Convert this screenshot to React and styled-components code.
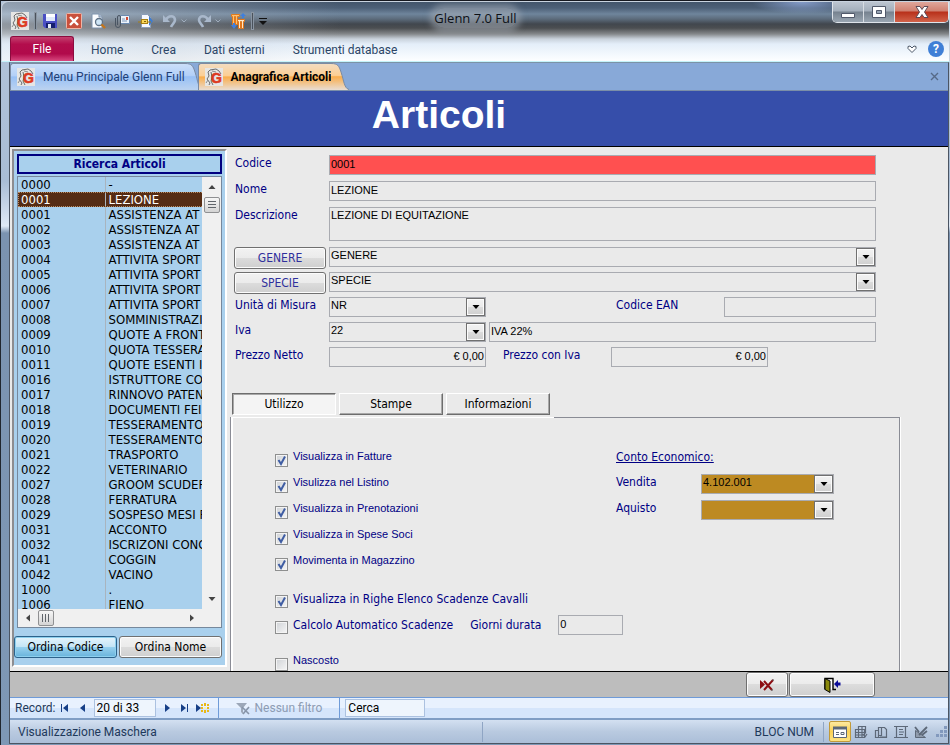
import React, { useState } from "react";
import styled, { createGlobalStyle, css } from "styled-components";

const ui = `Roboto, "Open Sans", sans-serif`;
const form = `"DejaVu Sans Condensed", "DejaVu Sans", sans-serif`;
const plain = `"Liberation Sans", Arial, sans-serif`;

const articles = [
    ["0000", "-"],
    ["0001", "LEZIONE"],
    ["0001", "ASSISTENZA AT"],
    ["0002", "ASSISTENZA AT"],
    ["0003", "ASSISTENZA AT"],
    ["0004", "ATTIVITA SPORT"],
    ["0005", "ATTIVITA SPORT"],
    ["0006", "ATTIVITA SPORT"],
    ["0007", "ATTIVITA SPORT"],
    ["0008", "SOMMINISTRAZI"],
    ["0009", "QUOTE A FRONT"],
    ["0010", "QUOTA TESSERA"],
    ["0011", "QUOTE ESENTI I"],
    ["0016", "ISTRUTTORE CO"],
    ["0017", "RINNOVO PATEN"],
    ["0018", "DOCUMENTI FEI"],
    ["0019", "TESSERAMENTO"],
    ["0020", "TESSERAMENTO"],
    ["0021", "TRASPORTO"],
    ["0022", "VETERINARIO"],
    ["0027", "GROOM SCUDERI"],
    ["0028", "FERRATURA"],
    ["0029", "SOSPESO MESI P"],
    ["0031", "ACCONTO"],
    ["0032", "ISCRIZONI CONC"],
    ["0041", "COGGIN"],
    ["0042", "VACINO"],
    ["1000", "."],
    ["1006", "FIENO"],
];

const Logo = () => (
    <svg width="18" height="18" viewBox="0 0 18 18">
        <rect width="18" height="18" fill="#e6e6e4" />
        <path d="M3 4l2-2 6-1 3 2 2 3M3 4l1 4-2 3 3 4-1 2M6 4l1 5-1 4 2 4" fill="none" stroke="#6b6b6b" />
        <path d="M7 3l4 1M1 15l2-3" stroke="#8b8b8b" />
        <text x="6" y="15" fontFamily="Liberation Sans" fontWeight="bold" fontSize="14" fill="#dd3a22" stroke="#dd3a22" strokeWidth=".6">G</text>
    </svg>
);

const SaveIcon = () => (
    <svg width="16" height="16" viewBox="0 0 16 16">
        <path d="M1 1h14v14H3l-2-2z" fill="#4a4fc4" />
        <path d="M4 1h9v7H4z" fill="#dfe8fb" />
        <path d="M4 1h9v3H4z" fill="#fff" />
        <path d="M4 10h9v5H4z" fill="#16206e" />
        <path d="M6 11h3v4H6z" fill="#e5ecf8" />
    </svg>
);

const DeleteIcon = () => (
    <svg width="16" height="16" viewBox="0 0 16 16">
        <rect x=".5" y=".5" width="15" height="15" rx="1" fill="#c9503c" stroke="#f0b5a6" />
        <path d="M4 4l8 8M12 4l-8 8" stroke="#fff" strokeWidth="2.400" />
    </svg>
);

const PreviewIcon = () => (
    <svg width="16" height="16" viewBox="0 0 16 16">
        <path d="M2 1h7l3 3v11H2z" fill="#fafcff" stroke="#7f93ad" />
        <path d="M9 1v3h3" fill="#c4d3e6" stroke="#7f93ad" />
        <circle cx="9" cy="9" r="3.500" fill="#cfe6f7" stroke="#5f7286" strokeWidth="1.300" />
        <path d="M11.500 11.500l3.500 3.500" stroke="#c4751b" strokeWidth="2.400" />
    </svg>
);

const AttachIcon = () => (
    <svg width="16" height="16" viewBox="0 0 16 16">
        <path d="M6.500 2.500h9v8h-9z" fill="#edf3fb" stroke="#6c8ab0" />
        <path d="M8 8h5M8 6h3" stroke="#7d98bb" />
        <path d="M12 4h2v3h-2z" fill="#d04a33" />
        <path d="M1.500 5v7a2.500 2.500 0 0 0 5 0V4a1 1 0 0 0-3 0v8" fill="none" stroke="#4a5563" />
    </svg>
);

const SendIcon = () => (
    <svg width="16" height="16" viewBox="0 0 16 16">
        <path d="M3.500 1.500h6l3 3v10h-9z" fill="#f6f9fe" stroke="#8a9db8" />
        <path d="M11 3l4 5-4 5z" fill="#3e7cd0" />
        <path d="M0 9h13" stroke="#a87f11" />
        <rect x="3.500" y="6.500" width="6" height="4" fill="#f8d65a" stroke="#a87f11" />
        <rect x="6" y="8" width="2" height="1" fill="#7e5f0d" />
    </svg>
);

const UndoIcon = ({ flip }) => (
    <svg width="16" height="16" viewBox="0 0 16 16">
        <g transform={flip ? "matrix(-1 0 0 1 16 0)" : undefined}>
            <path d="M4 7c2-5 9-5 9 0 0 3-3 4-4 7" fill="none" stroke="#a9b8cb" strokeWidth="2.600" />
            <path d="M1 2v7h7z" fill="#a9b8cb" />
        </g>
    </svg>
);

const ColumnsIcon = () => (
    <svg width="16" height="16" viewBox="0 0 16 16">
        <path d="M1.500 1.500h8v2h-2v8h-2v-8h-1v8h-2v-8h-1z" fill="#ffc070" stroke="#e07a1c" />
        <path d="M7.500 6.500h7v2h-1v7h-2v-7h-1v7h-2v-7h-1z" fill="#ffe9c8" stroke="#e1761b" />
        <path d="M13 0l3 3h-2v2h-2V3h-2zM1 12h2v-2h2v2h2l-3 4z" fill="#3f7fdd" />
    </svg>
);

const Chevron = ({ color = "#a0adbd" }) => (
    <svg width="8" height="6" viewBox="0 0 8 6">
        <path d="M1.500 1.500L4 4l2.500-2.500" fill="none" stroke={color} />
    </svg>
);

const Triangle = ({ dir = "down", color = "#000" }) => {
    const turn = { down: 0, left: 90, up: 180, right: 270 }[dir];
    return (
        <svg width="8" height="8" viewBox="0 0 8 8">
            <path d="M.5 2h7L4 6z" fill={color} transform={`rotate(${turn} 4 4)`} />
        </svg>
    );
};

const NavIcon = ({ kind }) => (
    <svg width="16" height="12" viewBox="0 0 16 12">
        <g fill="#173f87">
            {kind === "first" && <path d="M4 2h1v8H4zM11 2v8L6 6z" />}
            {kind === "prev" && <path d="M10 2v8L5 6z" />}
            {kind === "next" && <path d="M6 2v8l5-4z" />}
            {kind === "last" && <path d="M4 2v8l5-4zM10 2h1v8h-1z" />}
            {kind === "new" && <path d="M1 2v8l5-4z" />}
        </g>
        {kind === "new" && (
            <>
                <path d="M6 2h2v2H6zM9 1h2v3H9zM12 2h2v2h-2zM6 5h2v2H6zM12 5h2v2h-2zM6 8h2v2H6zM9 8h2v3H9zM12 8h2v2h-2z" fill="#e9b818" />
                <path d="M9 5h2v2H9z" fill="#fff2a8" />
            </>
        )}
    </svg>
);

const TabTail = ({ active }) => (
    <svg width="22" height="27" viewBox="0 0 22 27">
        <defs>
            <linearGradient id={active ? "tailOn" : "tailOff"} x1="0" y1="0" x2="0" y2="1">
                {active ? (
                    <>
                        <stop offset="0" stopColor="#f3dcc0" />
                        <stop offset=".45" stopColor="#fccf94" />
                        <stop offset=".5" stopColor="#f9ad4c" />
                        <stop offset="1" stopColor="#e9ddd3" />
                    </>
                ) : (
                    <>
                        <stop offset="0" stopColor="#cbdff9" />
                        <stop offset=".45" stopColor="#b3d0f8" />
                        <stop offset=".5" stopColor="#98c0f5" />
                        <stop offset="1" stopColor="#bcd3f0" />
                    </>
                )}
            </linearGradient>
        </defs>
        <path
            d="M0 .5C7 .5 8 3 10 9c3 9 3 16 8 18H0z"
            fill={`url(#${active ? "tailOn" : "tailOff"})`}
        />
        <path d="M0 .5C7 .5 8 3 10 9c3 9 3 16 8 17.500" fill="none" stroke="#7b8ba3" />
    </svg>
);

const ViewIcon = ({ kind }) => (
    <svg width="14" height="14" viewBox="0 0 14 14" fill="none" stroke="#5d6878">
        {kind === "form" && (
            <>
                <path d="M.5 2.500h13v10H.5z" fill="#fff" />
                <path d="M0 3h14" strokeWidth="3" />
                <path d="M3 7.500h3M3 9.500h3M8 7.500h3v2H8z" />
            </>
        )}
        {kind === "sheet" && <path d="M1.500 4.500h9v8h-9zM1 7.500h11M1 10h10M4.500 12V1.500h7v7M4.500 4.500h7M8 2v10M9 9l2 3 2-3" strokeWidth="1.200" />}
        {kind === "pivot" && <path d="M1.500 5.500h3v7h-3zM4.500 10.500v-8h3v8zM7.500 2.500h3l2 2v8h-11M6 12h6" strokeWidth="1.200" />}
        {kind === "chart" && <path d="M0 1.500h14M0 12.500h14M2.500 1v12M11.500 1v12M5 4.500h4M5 7h5M5 9.500h4" strokeWidth="1.200" />}
        {kind === "design" && (
            <>
                <path d="M1.500 5.500v7h10z" fill="#8f9bac" />
                <path d="M5 10l8-8M8 10l5-4M1 2l4 5" strokeWidth="1.800" />
            </>
        )}
    </svg>
);

const Combo = ({ id, value, tone, label }) => (
    <ComboBox $tone={tone}>
        <select id={id} aria-label={label} defaultValue={value}>
            <option>{value}</option>
        </select>
        <ComboArrow><Triangle /></ComboArrow>
    </ComboBox>
);

const Check = ({ id, label, checked, bold }) => {
    const [on, setOn] = useState(!!checked);
    return (
        <CheckItem>
            <Tick>
                <input type="checkbox" id={id} checked={on} onChange={() => setOn(!on)} />
                {on && (
                    <svg width="13" height="13" viewBox="0 0 13 13">
                        <path d="M3.500 6l2.500 4 4-7.500" fill="none" stroke="#3f5da3" strokeWidth="2" />
                    </svg>
                )}
            </Tick>
            <CheckLabel htmlFor={id} $bold={bold}>{label}</CheckLabel>
        </CheckItem>
    );
};

const TitleBar = () => (
    <Title>
        <QuickBar>
            <Logo />
            <Divider />
            <ToolButton aria-label="Salva"><SaveIcon /></ToolButton>
            <ToolButton aria-label="Elimina"><DeleteIcon /></ToolButton>
            <ToolButton aria-label="Anteprima"><PreviewIcon /></ToolButton>
            <ToolButton aria-label="Allega"><AttachIcon /></ToolButton>
            <ToolButton aria-label="Invia"><SendIcon /></ToolButton>
            <ToolButton aria-label="Annulla"><UndoIcon /><Chevron /></ToolButton>
            <ToolButton aria-label="Ripeti"><UndoIcon flip /><Chevron /></ToolButton>
            <ToolButton aria-label="Colonne"><ColumnsIcon /></ToolButton>
            <Divider />
            <ToolButton aria-label="Personalizza">
                <svg width="8" height="8" viewBox="0 0 8 8"><path d="M0 1h8v1H0zM0 4h8L4 8z" fill="#111" /></svg>
            </ToolButton>
        </QuickBar>
        <Caption>Glenn 7.0 Full</Caption>
        <WindowButtons>
            <WindowButton aria-label="Riduci">
                <svg width="14" height="12" viewBox="0 0 14 12"><path d="M.5 7.500h13v4H.5z" fill="#fff" stroke="#51596a" /></svg>
            </WindowButton>
            <WindowButton aria-label="Ingrandisci">
                <svg width="14" height="12" viewBox="0 0 14 12">
                    <path d="M.5.5h13v11H.5z" fill="#fff" stroke="#51596a" />
                    <path d="M4.500 4.500h5v3h-5z" fill="#9aa6b5" stroke="#51596a" />
                </svg>
            </WindowButton>
            <WindowButton $close aria-label="Chiudi">
                <svg width="14" height="12" viewBox="0 0 14 12">
                    <path d="M1 .5h4L7 3.500 9 .5h4L9.500 6l3.500 5.500H9L7 8.500 5 11.500H1L4.500 6z" fill="#fff" stroke="#5c4a55" />
                </svg>
            </WindowButton>
        </WindowButtons>
    </Title>
);

const Sidebar = () => (
    <Side>
        <SideTitle>Ricerca Articoli</SideTitle>
        <ListBox>
            <ListView>
                <ListTable>
                    <tbody>
                        {articles.map(([code, name], i) => (
                            <ListRow key={i} $selected={i === 1}>
                                <td>{code}</td>
                                <td>{name}</td>
                            </ListRow>
                        ))}
                    </tbody>
                </ListTable>
            </ListView>
            <ScrollBar $vertical>
                <Triangle dir="up" color="#444" />
                <Thumb $vertical />
                <Spacer />
                <Triangle color="#444" />
            </ScrollBar>
            <ScrollBar>
                <Triangle dir="left" color="#444" />
                <Thumb />
                <Spacer />
                <Triangle dir="right" color="#444" />
            </ScrollBar>
            <Corner />
        </ListBox>
        <SideButtons>
            <PushButton $active>Ordina Codice</PushButton>
            <PushButton>Ordina Nome</PushButton>
        </SideButtons>
    </Side>
);

const ArticleForm = () => (
    <Form>
        <Fields>
            <Row>
                <Label htmlFor="codice">Codice</Label>
                <Input id="codice" $alert defaultValue="0001" />
            </Row>
            <Row>
                <Label htmlFor="nome">Nome</Label>
                <Input id="nome" defaultValue="LEZIONE" />
            </Row>
            <Row>
                <Label htmlFor="descrizione">Descrizione</Label>
                <TextArea id="descrizione" defaultValue="LEZIONE DI EQUITAZIONE" />
            </Row>
            <TightRows>
                <Row>
                    <PushButton type="button" $link>GENERE</PushButton>
                    <Combo label="Genere" value="GENERE" />
                </Row>
                <Row>
                    <PushButton type="button" $link>SPECIE</PushButton>
                    <Combo label="Specie" value="SPECIE" />
                </Row>
                <Row>
                    <Label htmlFor="unita">Unità di Misura</Label>
                    <Narrow><Combo id="unita" value="NR" /></Narrow>
                    <Spacer />
                    <Label htmlFor="ean" $wide>Codice EAN</Label>
                    <Narrow $short><Input id="ean" /></Narrow>
                </Row>
                <Row>
                    <Label htmlFor="iva">Iva</Label>
                    <Narrow><Combo id="iva" value="22" /></Narrow>
                    <Input aria-label="Descrizione Iva" defaultValue="IVA 22%" />
                </Row>
                <Row>
                    <Label htmlFor="netto">Prezzo Netto</Label>
                    <Narrow><Input id="netto" $right defaultValue="€ 0,00" /></Narrow>
                    <Label htmlFor="lordo" $wide $indent>Prezzo con Iva</Label>
                    <Narrow><Input id="lordo" $right defaultValue="€ 0,00" /></Narrow>
                </Row>
            </TightRows>
        </Fields>
        <Tabs>
            <TabButton type="button" $pressed>Utilizzo</TabButton>
            <TabButton type="button">Stampe</TabButton>
            <TabButton type="button">Informazioni</TabButton>
        </Tabs>
        <Panel>
            <CheckColumn>
                <CheckGroup>
                    <Check id="fatture" label="Visualizza in Fatture" checked />
                    <Check id="listino" label="Visulizza nel Listino" checked />
                    <Check id="prenotazioni" label="Visualizza in Prenotazioni" checked />
                    <Check id="spese" label="Visualizza in Spese Soci" checked />
                    <Check id="magazzino" label="Movimenta in Magazzino" checked />
                </CheckGroup>
                <CheckGroup>
                    <Check id="righe" label="Visualizza in Righe Elenco Scadenze Cavalli" checked bold />
                    <Durata>
                        <Check id="calcolo" label="Calcolo Automatico Scadenze" bold />
                        <CheckLabel htmlFor="giorni" $bold>Giorni durata</CheckLabel>
                        <Input id="giorni" defaultValue="0" />
                    </Durata>
                </CheckGroup>
                <Check id="nascosto" label="Nascosto" />
            </CheckColumn>
            <Accounts>
                <AccountsTitle>Conto Economico:</AccountsTitle>
                <AccountRow>
                    <Label htmlFor="vendita">Vendita</Label>
                    <Combo id="vendita" tone="#bd8a22" value="4.102.001" />
                </AccountRow>
                <AccountRow>
                    <Label htmlFor="aquisto">Aquisto</Label>
                    <Combo id="aquisto" tone="#bd8a22" value="" />
                </AccountRow>
            </Accounts>
        </Panel>
    </Form>
);

const App = () => (
    <Window>
        <GlobalStyle />
        <Chrome>
            <TitleBar />
            <Ribbon>
                <FileButton>File</FileButton>
                <RibbonTab>Home</RibbonTab>
                <RibbonTab>Crea</RibbonTab>
                <RibbonTab>Dati esterni</RibbonTab>
                <RibbonTab>Strumenti database</RibbonTab>
                <Spacer />
                <ToolButton aria-label="Riduci barra">
                    <svg width="10" height="8" viewBox="0 0 10 8"><path d="M1 1.500l2-.5 2 2 2-2 2 .5v2L5 7.500 1 3.500z" fill="#fff" stroke="#4c5869" /></svg>
                </ToolButton>
                <HelpButton aria-label="Guida">?</HelpButton>
            </Ribbon>
        </Chrome>
        <Content>
            <DocTabs>
                <DocTab>
                    <DocBody><Logo />Menu Principale Glenn Full</DocBody>
                    <TabTail />
                </DocTab>
                <DocTab $active>
                    <DocBody $active><Logo />Anagrafica Articoli</DocBody>
                    <TabTail active />
                </DocTab>
                <Spacer />
                <ToolButton aria-label="Chiudi scheda">
                    <svg width="9" height="9" viewBox="0 0 9 9"><path d="M1 1l7 7M8 1L1 8" stroke="#566a87" strokeWidth="1.400" /></svg>
                </ToolButton>
            </DocTabs>
            <Banner>Articoli</Banner>
            <Body>
                <Sidebar />
                <ArticleForm />
            </Body>
            <Actions>
                <PushButton $size="42px" aria-label="Elimina record">
                    <svg width="16" height="12" viewBox="0 0 16 12">
                        <path d="M1 1v9l5-4.500z" fill="#8c0d12" />
                        <path d="M5 11L14 1M5 2l8 9" stroke="#8c0d12" strokeWidth="2" />
                        <path d="M13 1h2M12 11h2" stroke="#555" />
                    </svg>
                </PushButton>
                <PushButton $size="86px" aria-label="Esci">
                    <svg width="18" height="16" viewBox="0 0 18 16">
                        <path d="M2 12.500V1.500h8v11h3" fill="#fff" stroke="#000" strokeWidth="1.400" />
                        <path d="M2 1.500l5 2.500v11.500l-5-3z" fill="#8b8a0c" stroke="#000" />
                        <path d="M11 7l4-4v2.500h2.500v3H15V11z" fill="#0b0b98" />
                    </svg>
                </PushButton>
            </Actions>
            <RecordBar>
                <RecordGroup>
                    <label htmlFor="record">Record:</label>
                    <NavButton aria-label="Primo"><NavIcon kind="first" /></NavButton>
                    <NavButton aria-label="Precedente"><NavIcon kind="prev" /></NavButton>
                    <BarInput id="record" $size="62px" defaultValue="20 di 33" />
                    <NavButton aria-label="Successivo"><NavIcon kind="next" /></NavButton>
                    <NavButton aria-label="Ultimo"><NavIcon kind="last" /></NavButton>
                    <NavButton aria-label="Nuovo"><NavIcon kind="new" /></NavButton>
                </RecordGroup>
                <FilterButton>
                    <svg width="15" height="13" viewBox="0 0 15 13">
                        <path d="M0 1h11L7 6v6l-2-2V6z" fill="#9ca7b8" />
                        <path d="M6 5l7 7M13 5l-6 7" stroke="#8794a8" strokeWidth="1.600" />
                    </svg>
                    Nessun filtro
                </FilterButton>
                <BarInput aria-label="Cerca" $size="80px" defaultValue="Cerca" />
            </RecordBar>
            <StatusBar>
                <StatusText>Visualizzazione Maschera</StatusText>
                <StatusKeys>BLOC NUM</StatusKeys>
                <Views>
                    <ViewButton $active aria-label="Maschera"><ViewIcon kind="form" /></ViewButton>
                    <ViewButton aria-label="Foglio dati"><ViewIcon kind="sheet" /></ViewButton>
                    <ViewButton aria-label="Pivot"><ViewIcon kind="pivot" /></ViewButton>
                    <ViewButton aria-label="Grafico"><ViewIcon kind="chart" /></ViewButton>
                    <ViewButton aria-label="Struttura"><ViewIcon kind="design" /></ViewButton>
                </Views>
                <svg width="12" height="12" viewBox="0 0 12 12">
                    <path d="M8 0h3v3H8zM4 4h3v3H4zM8 4h3v3H8zM0 8h3v3H0zM4 8h3v3H4zM8 8h3v3H8z" fill="#8299bd" />
                </svg>
            </StatusBar>
        </Content>
    </Window>
);

const GlobalStyle = createGlobalStyle`
    * {
        box-sizing: border-box;
    }
    body {
        margin: 0;
        font: 12px ${ui};
        color: #1e395b;
    }
    button, input, select, textarea {
        font: inherit;
        color: inherit;
        margin: 0;
        padding: 0;
        border: 0;
        border-radius: 0;
        background: none;
        outline: none;
    }
    svg {
        display: block;
        flex: none;
    }
`;

const Window = styled.div`
    display: flex;
    flex-direction: column;
    height: 100vh;
    padding: 0 1px 1px 3px;
    border-left: 1px solid #20262e;
    border-top: 1px solid #16181f;
    background: linear-gradient(#b4c5da 0, #a9bdd5 180px, #dfe9f5 225px, #7b93b0 232px, #7e98b6 100%);
    overflow: hidden;
`;

const Chrome = styled.div`
    margin: 0 -1px 0 -3px;
    border: 1px solid #c9d3df;
    border-bottom: 1px solid #c4f3fa;
    border-radius: 7px 0 0 0;
    background:
        linear-gradient(90deg, rgba(222, 232, 243, .5) 0, rgba(190, 198, 208, .3) 180px, transparent 340px),
        radial-gradient(50px 12px at 800px 0, rgba(160, 185, 240, .7), transparent),
        linear-gradient(#43556b 0, #4d6077 6px, #6f859c 12px, #5c6b7b 17px, #41474e 22px, #4b4e51 26px, #85888b 32px, #c9d2dc 37px, #e4eef9 42px, #f6fafe 54px, #fdfeff 100%);
`;

const Title = styled.div`
    display: grid;
    grid-template-columns: 1fr auto 1fr;
    align-items: start;
    height: 34px;
`;

const QuickBar = styled.div`
    display: flex;
    align-items: center;
    gap: 8px;
    padding: 10px 0 0 9px;
`;

const Divider = styled.span`
    width: 3px;
    height: 18px;
    margin: 0 -3px;
    border: 1px solid #8a95a2;
    background: #4a525c;
`;

const ToolButton = styled.button`
    display: flex;
    align-items: center;
    gap: 2px;
`;

const Caption = styled.div`
    margin-top: 6px;
    border-radius: 10px;
    font: 13px/20px "Open Sans", sans-serif;
    color: #0c1016;
    background: rgba(170, 178, 188, .5);
    box-shadow: 0 0 6px 4px rgba(170, 178, 188, .5);
`;

const WindowButtons = styled.div`
    display: flex;
    justify-self: end;
    border: 1px solid #dfe4ea;
    border-top: 0;
    border-radius: 0 0 5px 5px;
    overflow: hidden;
`;

const WindowButton = styled.button`
    display: grid;
    place-items: center;
    width: ${p => (p.$close ? 53 : 31)}px;
    height: 20px;
    border-right: ${p => (p.$close ? 0 : "1px solid #d8dde3")};
    background: ${p => (p.$close
        ? "linear-gradient(#e0a79b, #d08070 45%, #b8301a 50%, #d2634a)"
        : "linear-gradient(#bcc5d0, #a3aebb 45%, #76828f 50%, #9aa6b2)")};
`;

const Ribbon = styled.div`
    display: flex;
    align-items: center;
    height: 25px;
    padding: 0 5px 0 8px;
`;

const FileButton = styled.button`
    align-self: stretch;
    width: 64px;
    margin-right: 3px;
    border: 1px solid #8c0b3e;
    border-bottom: 0;
    border-radius: 3px 3px 0 0;
    color: #fff;
    background: linear-gradient(#c4406f, #b30d4c 30%, #b10a4b 70%, #d8487f);
`;

const RibbonTab = styled.button`
    padding: 2px 14px 0;
    color: #2b4566;
`;

const HelpButton = styled.button`
    width: 16px;
    height: 16px;
    margin-left: 11px;
    border-radius: 50%;
    font-weight: bold;
    line-height: 16px;
    color: #fff;
    background: #3f7fd6;
`;

const Spacer = styled.span`
    flex: 1;
`;

const Content = styled.div`
    display: flex;
    flex-direction: column;
    flex: 1;
    min-height: 0;
    margin-left: 5px;
    border: 1px solid #4b5563;
    border-top-color: #7c93a6;
`;

const DocTabs = styled.div`
    display: flex;
    align-items: end;
    height: 28px;
    padding-right: 9px;
    border-bottom: 1px solid #7b8ea8;
    background: #88a9d8;
    > button {
        align-self: center;
    }
`;

const DocTab = styled.div`
    display: flex;
    margin-right: -21px;
    z-index: ${p => (p.$active ? 1 : 0)};
    margin-left: ${p => (p.$active ? "12px" : 0)};
`;

const DocBody = styled.button`
    display: flex;
    align-items: center;
    gap: 8px;
    height: 27px;
    padding-left: 6px;
    border: 1px solid #7b8ba3;
    border-width: 1px 0 0 1px;
    border-radius: 3px 0 0 0;
    color: #1e3f77;
    white-space: nowrap;
    background: linear-gradient(#cbdff9, #b3d0f8 45%, #98c0f5 50%, #bcd3f0);
    ${p => p.$active && css`
        font-weight: bold;
        color: #000;
        background: linear-gradient(#f3dcc0, #fccf94 45%, #f9ad4c 50%, #e9ddd3);
    `}
`;

const Banner = styled.h1`
    margin: 0;
    padding-right: 80px;
    border-bottom: 1px solid #000;
    font: bold 39px/47px ${plain};
    height: 56px;
    text-align: center;
    color: #fff;
    background: #364eaa;
`;

const Body = styled.div`
    display: flex;
    flex: 1;
    min-height: 0;
    overflow: hidden;
    border-bottom: 1px solid #000;
    font: 12px/16px ${form};
    color: #000084;
    background: #eaeaea;
`;

const Side = styled.aside`
    display: flex;
    flex-direction: column;
    flex: none;
    width: 215px;
    margin: 2px 1px 4px 2px;
    padding: 3px;
    border: 2px solid;
    border-color: #8d8d90 #fff #fff #8d8d90;
    background: #a9d0ed;
`;

const SideTitle = styled.h2`
    margin: 0 0 2px;
    border: 2px solid #000080;
    font-size: 12px;
    line-height: 16px;
    text-align: center;
`;

const ListBox = styled.div`
    display: grid;
    grid-template: minmax(0, 1fr) 18px / minmax(0, 1fr) 19px;
    flex: 1;
    min-height: 0;
    border: 1px solid #76889c;
`;

const ListView = styled.div`
    overflow: hidden;
`;

const ListTable = styled.table`
    width: 280px;
    table-layout: fixed;
    border-collapse: collapse;
    font-size: 13px;
    line-height: 15px;
    color: #000;
    td {
        padding: 0 0 0 3px;
        white-space: nowrap;
    }
    td:first-child {
        width: 87px;
        border-right: 1px solid #a9b4be;
    }
`;

const ListRow = styled.tr`
    ${p => p.$selected && css`
        color: #fff;
        background: #552c14;
        outline: 1px dotted #b98c63;
        outline-offset: -1px;
    `}
`;

const ScrollBar = styled.div`
    display: flex;
    flex-direction: ${p => (p.$vertical ? "column" : "row")};
    align-items: center;
    gap: 6px;
    padding: ${p => (p.$vertical ? "6px 0" : "0 6px")};
    background: #f0f0f0;
`;

const Thumb = styled.div`
    width: 16px;
    height: 16px;
    border: 1px solid #8f9092;
    border-radius: 2px;
    padding: 3px;
    background:
        repeating-linear-gradient(${p => (p.$vertical ? "180deg" : "90deg")}, #60656b 0 1px, transparent 1px 3px) content-box,
        linear-gradient(#f6f6f6, #d4d4d4);
`;

const Corner = styled.div`
    background: #f0f0f0;
`;

const SideButtons = styled.div`
    display: flex;
    gap: 2px;
    margin: 8px 0 4px -3px;
    > button {
        flex: 1;
    }
`;

const PushButton = styled.button`
    display: grid;
    place-items: center;
    flex: none;
    width: ${p => p.$size || "92px"};
    height: 22px;
    border: 1px solid #707070;
    border-radius: 3px;
    box-shadow: inset 0 0 0 1px #fcfcfc;
    color: #000;
    background: linear-gradient(#f2f2f2, #ebebeb 48%, #dcdcdc 50%, #cfcfcf);
    ${p => p.$link && css`
        margin: 0 3px 0 -1px;
        color: #2f2f9c;
    `}
    ${p => p.$active && css`
        border-color: #2c628b;
        box-shadow: inset 0 0 0 1px #8ed0ee;
        background: linear-gradient(#e5f4fc, #c4e5f6 48%, #98d1ef 50%, #68b3db);
    `}
`;

const Form = styled.form`
    display: flex;
    flex-direction: column;
    flex: 1;
    min-width: 0;
    padding: 8px 48px 0 2px;
`;

const Fields = styled.div`
    display: flex;
    flex-direction: column;
    gap: 6px;
    padding: 0 24px 0 5px;
`;

const TightRows = styled.div`
    display: flex;
    flex-direction: column;
    gap: 5px;
`;

const Row = styled.div`
    display: flex;
    align-items: flex-start;
    > button {
        margin-bottom: -2px;
    }
`;

const Label = styled.label`
    flex: none;
    width: ${p => (p.$wide ? 108 : 94)}px;
    margin-left: ${p => (p.$indent ? "14px" : 0)};
`;

const field = css`
    flex: 1;
    min-width: 0;
    width: 100%;
    height: 20px;
    padding: 0 1px 3px;
    border: 1px solid #a9abb1;
    font: 11px/15px ${plain};
    color: #000;
`;

const Input = styled.input`
    ${field}
    text-align: ${p => (p.$right ? "right" : "left")};
    background: ${p => (p.$alert ? "#ff5050" : "none")};
`;

const TextArea = styled.textarea`
    ${field}
    height: 34px;
    resize: none;
`;

const Narrow = styled.div`
    flex: none;
    display: flex;
    width: ${p => (p.$short ? 152 : 157)}px;
    margin-right: 3px;
    &:last-child {
        margin-right: 0;
    }
`;

const ComboBox = styled.div`
    display: grid;
    grid-template-columns: minmax(0, 1fr) 19px;
    flex: 1;
    height: 20px;
    border: 1px solid #a9abb1;
    background: ${p => p.$tone || "none"};
    select {
        grid-area: 1 / 1 / 2 / 3;
        appearance: none;
        padding: 0 20px 3px 1px;
        font: 11px/15px ${plain};
        color: #000;
    }
`;

const ComboArrow = styled.span`
    grid-area: 1 / 2;
    display: grid;
    place-items: center;
    border: 1px solid #707070;
    box-shadow: inset 0 0 0 1px #fcfcfc;
    background: linear-gradient(#f2f2f2, #ebebeb 48%, #dcdcdc 50%, #cfcfcf);
    pointer-events: none;
`;

const Tabs = styled.div`
    display: flex;
    gap: 3px;
    margin: 26px 0 2px 2px;
`;

const TabButton = styled.button`
    width: 104px;
    height: 22px;
    border: 1px solid;
    border-color: #fff #6d6d6d #6d6d6d #fff;
    box-shadow: inset -1px -1px #a8a8a8;
    color: #000;
    ${p => p.$pressed && css`
        border-color: #6d6d6d #fff #fff #6d6d6d;
        box-shadow: inset 1px 1px #a8a8a8;
        background: #f4f4f4;
    `}
`;

const Panel = styled.div`
    display: flex;
    flex: 1;
    min-height: 0;
    padding: 31px 65px 0 44px;
    border: solid #8a8c95;
    border-width: 0 1px 0 1px;
    box-shadow: inset 2px 0 #fff, 1px 0 #fff;
    background: linear-gradient(90deg, #fff 323px, #8a8c95 323px) top / 100% 1px no-repeat;
`;

const CheckColumn = styled.div`
    display: flex;
    flex-direction: column;
    flex: 1;
    min-width: 0;
    gap: 17px;
`;

const CheckGroup = styled.div`
    display: flex;
    flex-direction: column;
    gap: 6px;
`;

const CheckItem = styled.div`
    display: flex;
    align-items: flex-start;
    gap: 5px;
    height: 20px;
`;

const Tick = styled.span`
    display: grid;
    margin-top: 6px;
    > * {
        grid-area: 1 / 1;
        pointer-events: none;
    }
    input {
        appearance: none;
        width: 13px;
        height: 13px;
        border: 1px solid #8e8f8f;
        box-shadow: inset 0 0 0 1px #f4f4f4;
        background: linear-gradient(135deg, #cfd2d6, #f6f6f6);
        pointer-events: auto;
    }
`;

const CheckLabel = styled.label`
    white-space: nowrap;
    font: ${p => (p.$bold ? `12px/20px ${form}` : `11px/16px ${plain}`)};
`;

const Durata = styled.div`
    display: flex;
    align-items: flex-start;
    gap: 17px;
    ${Input} {
        flex: none;
        width: 65px;
    }
`;

const Accounts = styled.div`
    display: flex;
    flex-direction: column;
    gap: 6px;
    width: 218px;
    flex: none;
`;

const AccountsTitle = styled.span`
    height: 20px;
    text-decoration: underline;
    line-height: 18px;
`;

const AccountRow = styled.div`
    display: flex;
    align-items: flex-start;
    ${Label} {
        width: 85px;
    }
`;

const Actions = styled.div`
    display: flex;
    justify-content: flex-end;
    gap: 1px;
    padding-right: 73px;
    background: #bdbdbd;
    > button {
        height: 25px;
    }
`;

const RecordBar = styled.div`
    display: flex;
    align-items: center;
    height: 23px;
    border-top: 1px solid #6f9bd8;
    border-bottom: 2px solid #7f9dc4;
    background: linear-gradient(#e8f1fe 50%, #d5e5fb 50%);
`;

const RecordGroup = styled.div`
    display: flex;
    align-items: center;
    align-self: stretch;
    gap: 1px;
    padding: 0 6px 0 5px;
    border-right: 1px solid #6f9bd8;
`;

const NavButton = styled.button`
    display: grid;
    place-items: center;
    width: 17px;
    height: 18px;
`;

const BarInput = styled.input`
    width: ${p => p.$size};
    height: 18px;
    padding: 0 2px;
    margin-left: 5px;
    border: 1px solid #abc1e0;
    color: #000;
    background: #eef5fd;
    ${RecordGroup} & {
        margin: 0 2px 0 1px;
    }
`;

const FilterButton = styled.button`
    display: flex;
    align-items: center;
    align-self: stretch;
    gap: 4px;
    padding: 0 17px;
    border-right: 1px solid #6f9bd8;
    color: #8d9cb3;
`;

const StatusBar = styled.div`
    display: flex;
    align-items: center;
    height: 23px;
    padding-left: 8px;
    background: linear-gradient(#d3e0f1, #b9cae0 50%, #abbed8);
`;

const StatusText = styled.span`
    width: 50%;
    margin-right: auto;
    border-right: 1px solid #8fa5c4;
    line-height: 20px;
`;

const StatusKeys = styled.span`
    padding-right: 9px;
    border-right: 1px solid #8fa5c4;
    line-height: 20px;
`;

const Views = styled.div`
    display: flex;
    padding: 0 5px;
`;

const ViewButton = styled.button`
    display: grid;
    place-items: center;
    width: ${p => (p.$active ? 22 : 20)}px;
    height: 21px;
    ${p => p.$active && css`
        border: 1px solid #c29a3a;
        border-radius: 2px;
        background: linear-gradient(#fde9a0, #fbd155 50%, #fde382);
    `}
`;

export default App;
